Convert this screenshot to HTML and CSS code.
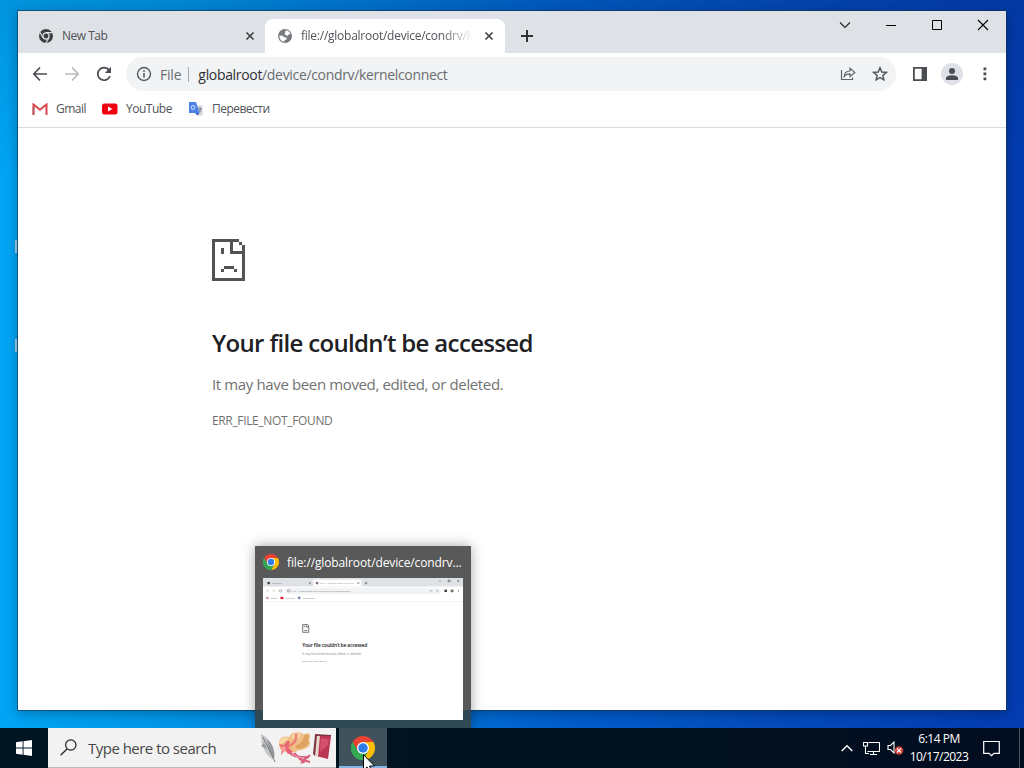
FILE: index.html
```html
<!DOCTYPE html>
<html lang="en">

<head>
    <meta charset="UTF-8">
    <meta name="viewport" content="width=device-width, initial-scale=1.0">
    <title>Desktop</title>
    <link rel="stylesheet" href="styles.css">
</head>

<body>
    <svg class="sprite" aria-hidden="true">
        <symbol id="chrome" viewBox="0 0 48 48">
            <path fill="#ea4335" d="M24 24 L3.2 12 A24 24 0 0 1 44.8 12 Z" />
            <path fill="#fbbc05" d="M24 24 L24 12 L44.8 12 A24 24 0 0 1 24 48 L34.4 30 Z" />
            <path fill="#34a853" d="M24 24 L34.4 30 L24 48 A24 24 0 0 1 3.2 12 L13.6 30 Z" />
            <path fill="#ea4335" d="M3.2 12 L13.6 30 L24 24 L24 12 Z" />
            <path fill="#34a853" d="M3.2 12 L13.6 30 L24 36 L24 48 A24 24 0 0 1 3.2 12 Z" />
            <circle cx="24" cy="24" r="12" fill="#fff" />
            <circle cx="24" cy="24" r="9.5" fill="#2f7de9" />
        </symbol>
        <symbol id="close" viewBox="0 0 10 10">
            <path d="M1.500 1.500 L8.500 8.500 M8.500 1.500 L1.500 8.500" stroke="#3c4043" stroke-width="1.600" />
        </symbol>
    </svg>

    <div class="desktop">
        <i class="label-edge one"></i>
        <i class="label-edge two"></i>

        <div class="window">
            <div class="tabstrip">
                <div class="tab">
                    <svg width="14" height="14" viewBox="0 0 48 48">
                        <circle cx="24" cy="24" r="24" fill="#3c4043" />
                        <circle cx="24" cy="24" r="10.5" fill="none" stroke="#dee1e6" stroke-width="4" />
                        <path d="M24 12.500 H46 M14 30 L3 11 M34 30 L23 49" stroke="#dee1e6" stroke-width="4" />
                    </svg>
                    <span class="tab-title">New Tab</span>
                    <svg class="tab-close" width="10" height="10"><use href="#close" /></svg>
                </div>
                <div class="tab active">
                    <svg width="14" height="14" viewBox="0 0 24 24">
                        <circle cx="12" cy="12" r="12" fill="#767a7e" />
                        <path fill="#fff" d="M13 2.300 C17 2.500 20.500 5 21.500 9 L19 8.500 L17 11.500 L13.500 10.500 L11 8 L12.500 5.500 Z M2.300 11 L8 11.500 L11.500 14.500 L15 14.500 L14.500 18 L11.500 19 L11 21.800 C6 21.500 2.200 17 2.300 11 Z" />
                    </svg>
                    <span class="tab-title fade">file://globalroot/device/condrv/k</span>
                    <svg class="tab-close" width="10" height="10"><use href="#close" /></svg>
                </div>
                <svg class="new-tab" width="12" height="12" viewBox="0 0 12 12">
                    <path d="M6 0 V12 M0 6 H12" stroke="#303236" stroke-width="2" />
                </svg>
                <div class="controls">
                    <svg width="46" height="28" viewBox="0 0 46 28"><path d="M18 11.500 L23 16.500 L28 11.500" fill="none" stroke="#222" stroke-width="1.100" /></svg>
                    <svg width="46" height="28" viewBox="0 0 46 28"><path d="M18 14.500 H28" stroke="#000" /></svg>
                    <svg width="46" height="28" viewBox="0 0 46 28"><path d="M18.500 9.500 H27.500 V18.500 H18.500 Z" fill="none" stroke="#000" /></svg>
                    <svg width="46" height="28" viewBox="0 0 46 28"><path d="M18 9 L28 19 M28 9 L18 19" stroke="#000" stroke-width="1.100" /></svg>
                </div>
            </div>

            <div class="toolbar">
                <svg class="nav" width="16" height="16" viewBox="0 0 16 16"><path d="M15 8 H2.500 M8 1.500 L1.800 8 L8 14.500" fill="none" stroke="#4a4d51" stroke-width="1.700" /></svg>
                <svg class="nav" width="16" height="16" viewBox="0 0 16 16"><path d="M1 8 H13.500 M8 1.500 L14.200 8 L8 14.500" fill="none" stroke="#b9bbbe" stroke-width="1.700" /></svg>
                <svg class="nav" width="16" height="16" viewBox="0 0 16 16"><path d="M13.200 4.300 A6.300 6.300 0 1 0 14 10" fill="none" stroke="#4a4d51" stroke-width="1.700" /><path d="M15 0.800 V7 H8.800 Z" fill="#4a4d51" /></svg>
                <div class="omnibox">
                    <svg width="16" height="16" viewBox="0 0 16 16">
                        <circle cx="8" cy="8" r="6.500" fill="none" stroke="#55595d" stroke-width="1.400" />
                        <path d="M8 7 V11.500 M8 4.200 V5.900" stroke="#55595d" stroke-width="1.600" />
                    </svg>
                    <span class="scheme">File</span>
                    <span class="url"><b>globalroot</b>/device/condrv/kernelconnect</span>
                    <svg class="share" width="16" height="14" viewBox="0 0 16 14">
                        <path d="M1.500 3 V12.500 H12.500 V10.500 M4.200 9.500 C4.500 6 6.500 4 10 4 V1.400 L14.800 5.400 L10 9.400 V6.800 C7.300 6.700 5.600 7.600 4.200 9.500 Z" fill="none" stroke="#5f6368" stroke-width="1.200" />
                    </svg>
                    <svg class="star" width="16" height="16" viewBox="0 0 16 16">
                        <path d="M8 1.800 L9.800 6 L14.300 6.400 L10.900 9.400 L11.900 13.800 L8 11.500 L4.100 13.800 L5.100 9.400 L1.700 6.400 L6.200 6 Z" fill="none" stroke="#55595d" stroke-width="1.500" />
                    </svg>
                </div>
                <svg class="panel" width="14" height="14" viewBox="0 0 14 14"><path fill="#4a4d51" fill-rule="evenodd" d="M0 0 H14 V14 H0 Z M1.800 1.800 V12.200 H8.600 V1.800 Z" /></svg>
                <svg class="avatar" width="22" height="22" viewBox="0 0 22 22">
                    <circle cx="11" cy="11" r="11" fill="#dfe1e7" />
                    <circle cx="11" cy="8" r="3" fill="#4a4d58" />
                    <path fill="#4a4d58" d="M5 17 V15.200 C5 11.300 17 11.300 17 15.200 V17 Z" />
                </svg>
                <svg class="menu" width="4" height="14" viewBox="0 0 4 14"><path fill="#4a4d51" d="M.5 .5 h2.800 v2.800 h-2.800 z M.5 5.500 h2.800 v2.800 h-2.800 z M.5 10.500 h2.800 v2.800 h-2.800 z" /></svg>
            </div>

            <div class="bookmarks">
                <svg width="16" height="12" viewBox="0 0 16 12">
                    <path d="M1.500 12 V1.500 L8 6.800 L14.500 1.500 V12" fill="none" stroke="#d9464b" stroke-width="2" />
                    <path d="M1.500 12 V4" stroke="#b9636f" stroke-width="2" />
                </svg>
                <span>Gmail</span>
                <svg width="16" height="12" viewBox="0 0 16 12"><rect y=".5" width="15.500" height="11" rx="2.500" fill="#f00010" /><path d="M6 3.600 L10.400 6 L6 8.400 Z" fill="#fff" /></svg>
                <span>YouTube</span>
                <svg width="16" height="16" viewBox="0 0 16 16">
                    <path fill="#d3d5d9" d="M6 4.500 H14.500 V14.500 H9 Z" />
                    <path fill="#4c82e8" d="M1 1 H8 L11.500 12 H1 Z" />
                    <path fill="#3860c0" d="M7 12 H11.500 L9.500 14.500 Z" />
                    <circle cx="5" cy="6.400" r="1.900" fill="none" stroke="#dce7fc" />
                    <path d="M9.800 7.500 H14 M12 6.500 V7.500 M13.200 7.500 L10.800 11 M10.800 8.500 L13.500 11" stroke="#6e7e92" fill="none" stroke-width=".8" />
                </svg>
                <span>Перевести</span>
            </div>

            <div class="page">
                <svg class="sad-file" width="33" height="42" viewBox="0 0 33 42" shape-rendering="crispEdges">
                    <path fill="#535353" fill-rule="evenodd" d="M0 0 H27 V3 H30 V6 H33 V42 H0 Z M3 3 V39 H30 V15 H18 V3 Z M21 3 V12 H30 V6 H27 V3 Z" />
                    <path fill="#535353" d="M9 9 H12 V15 H9 Z M12 27 H22 V30 H12 Z M9 30 H12 V33 H9 Z M22 30 H25 V33 H22 Z" />
                </svg>
                <h1>Your file couldn’t be accessed</h1>
                <p class="reason">It may have been moved, edited, or deleted.</p>
                <p class="code">ERR_FILE_NOT_FOUND</p>
            </div>
        </div>

        <div class="preview">
            <div class="preview-head">
                <svg width="16" height="16"><use href="#chrome" /></svg>
                <span>file://globalroot/device/condrv...</span>
            </div>
            <svg class="thumb" width="200" height="142" viewBox="0 0 988 701">
                <path fill="#fff" d="M0 0 H988 V701 H0 Z" />
                <path fill="#dee1e6" d="M0 0 H988 V42 H0 Z" />
                <path fill="#fff" d="M247 8 H487 V42 H247 Z" />
                <rect x="108" y="48" width="770" height="32" rx="16" fill="#f1f3f4" />
                <path d="M0 116 H988" stroke="#f0f0f0" stroke-width="4" />
                <circle cx="28" cy="25" r="7" fill="#444" />
                <circle cx="267" cy="25" r="7" fill="#8a6a80" />
                <path d="M228 21 l8 8 m0 -8 l-8 8 M467 21 l8 8 m0 -8 l-8 8 M503 25 h12 M509 19 v12 M870 14 h8 M914 10 h10 v8 h-10 z M960 10 l10 9 m0 -9 l-10 9" stroke="#555" stroke-width="3" fill="none" />
                <path d="M16 63 h12 M48 63 h10" stroke="#999" stroke-width="3" />
                <circle cx="86" cy="63" r="6" fill="none" stroke="#888" stroke-width="3" />
                <circle cx="127" cy="63" r="6" fill="none" stroke="#777" stroke-width="3" />
                <path d="M824 63 h12 M856 63 h12 M966 58 v11" stroke="#999" stroke-width="4" />
                <path d="M896 57 h13 v12 h-13 z" fill="#444" />
                <circle cx="934" cy="63" r="8" fill="#777" />
                <path d="M86 93 h15 v11 h-15 z" fill="#e02030" />
                <path d="M15 93 h13 v11 h-13 z" fill="#d49ca0" />
                <path d="M172 92 h13 v12 h-13 z" fill="#7088b0" />
                <g class="thumb-small">
                    <text x="44" y="30">New Tab</text>
                    <text x="283" y="30" textLength="165">file://globalroot/device</text>
                    <text x="142" y="68" textLength="288">File | globalroot/device/condrv/kernelconnect</text>
                    <text x="38" y="103">Gmail</text>
                    <text x="109" y="103">YouTube</text>
                    <text x="195" y="103">Перевести</text>
                </g>
                <g transform="translate(194 228)">
                    <path fill="none" stroke="#555" stroke-width="4" d="M2 2 H27 L32 8 V40 H2 Z M19 2 V14 H32 M10 9 V15 M10 31 H24" />
                </g>
                <text class="thumb-title" x="194" y="341" textLength="321">Your file couldn’t be accessed</text>
                <text class="thumb-text" x="194" y="379" textLength="292">It may have been moved, edited, or deleted.</text>
                <text class="thumb-small" x="194" y="414" textLength="121">ERR_FILE_NOT_FOUND</text>
            </svg>
        </div>

        <div class="taskbar">
            <div class="start">
                <svg width="16" height="16" viewBox="0 0 16 16"><path fill="#fff" d="M0 2.300 L6.600 1.300 V7.500 H0 Z M7.500 1.200 L16 0 V7.500 H7.500 Z M0 8.500 H6.600 V14.700 L0 13.700 Z M7.500 8.500 H16 V16 L7.500 14.800 Z" /></svg>
            </div>
            <div class="search">
                <svg class="lens" width="17" height="17" viewBox="0 0 17 17"><circle cx="10.800" cy="6" r="5.200" fill="none" stroke="#222" stroke-width="1.200" /><path d="M7 10 L.6 16.200" stroke="#222" stroke-width="1.300" /></svg>
                <span>Type here to search</span>
                <svg class="art" width="76" height="36" viewBox="0 0 76 36">
                    <path fill="#c4c6c8" d="M3 4 C6 6 9 7 10 10 C13 13 17 20 17 27 L15 29 C8 26 3 17 3 4 Z" />
                    <path fill="#95989c" d="M9 9 C14 13 17 19 16 28 C12 24 10 18 9 9 Z M3 16 L9 19 L6 13 Z" />
                    <path d="M5 7 C9 16 13 23 17 32" fill="none" stroke="#76797f" />
                    <path fill="#f0bf85" d="M21 14 C21 8 25 5 31 7 C33 1 43 1 46 5 C51 1 54 5 51 10 C55 15 48 20 41 20 C35 24 26 23 22 19 Z" />
                    <path fill="#dfa262" d="M37 16 C43 14 46 9 46 5 C50 3 52 6 50 10 C53 14 46 19 40 19 Z" />
                    <path fill="#f8d5a4" d="M22 12 C23 7 27 7 31 8 L29 11 C26 11 24 13 22 16 Z M33 6 C35 3 41 3 43 5 C42 8 38 10 36 11 Z" />
                    <path d="M29 16 C35 16 39 10 38 4" fill="none" stroke="#ec8079" stroke-width="2.500" />
                    <path fill="#e96574" d="M21 14 L26 15 L30 10 L32 12 L30 17 L35 22 L30 24 L27 20 L23 25 L24 19 Z" />
                    <path fill="#fa9a9c" d="M23 17 L27 16 L28 20 L25 22 Z" />
                    <path d="M30 21 C34 26 42 28 51 27 M36 23 C40 28 44 28 46 33 M41 29 L52 32 M43 33 L52 25" fill="none" stroke="#da607e" stroke-width="2.300" />
                    <path d="M34 24 C39 27 42 28 46 28" fill="none" stroke="#f4a2af" />
                    <path fill="#b93753" d="M60 5 L73 6 L70 29 L58 26 Z" />
                    <path fill="#ead7c9" d="M58 6 L62 6 L60 27 L56 25 Z" />
                    <path fill="#7d3440" d="M57 5 L59 5 L57 26 L55 24 Z M57 4 L73 5 L73 6 L57 6 Z" />
                    <path fill="#d84f6b" d="M63 8 L71 9 L70 15 L62 22 Z" />
                </svg>
            </div>
            <div class="app">
                <svg width="24" height="24"><use href="#chrome" /></svg>
            </div>
            <div class="tray">
                <svg width="12" height="8" viewBox="0 0 12 8"><path d="M.7 7 L6 1.700 L11.300 7" fill="none" stroke="#fff" stroke-width="1.400" /></svg>
                <svg class="net" width="17" height="15" viewBox="0 0 17 15"><path d="M5.500 1.500 H16.500 V10.500 H4.500 M10.500 10.500 V13.500 M7 13.500 H14 M.5 1.500 H4.500 V5 H.5 Z M2.500 5 V12.500 H6" fill="none" stroke="#fff" stroke-width="1.100" /></svg>
                <svg class="sound" width="18" height="16" viewBox="0 0 18 16">
                    <path d="M1 5.500 H3.500 L7 2 V13 L3.500 9.500 H1 Z" fill="none" stroke="#fff" stroke-width="1.100" />
                    <circle cx="12" cy="10.500" r="4.300" fill="#d0413d" />
                    <path d="M10 8.500 L14 12.500 M14 8.500 L10 12.500" stroke="#fff" stroke-width="1.100" />
                </svg>
                <div class="clock">
                    <span>6:14 PM</span>
                    <span>10/17/2023</span>
                </div>
                <svg class="notify" width="17" height="17" viewBox="0 0 17 17"><path d="M.7 1.500 H16.300 V13.300 H11 L8.500 15.700 L6 13.300 H.7 Z" fill="none" stroke="#fff" stroke-width="1.200" /></svg>
            </div>
        </div>

        <svg class="cursor" width="12" height="19" viewBox="0 0 12 19">
            <path d="M.5 .7 V16.500 L4.100 13 L6.500 18.500 L9 17.400 L6.600 12 H11.500 Z" fill="#fff" stroke="#000" />
        </svg>
    </div>
</body>

</html>
```
FILE: styles.css
```css
body {
    margin: 0;
    font-family: "Open Sans", "Noto Sans", sans-serif;
    font-size: 12px;
    white-space: nowrap;
}

svg {
    display: block;
    flex: none;
}

h1,
p {
    margin: 0;
}

.sprite {
    position: absolute;
    width: 0;
    height: 0;
}

.desktop {
    position: relative;
    width: 1024px;
    height: 768px;
    overflow: hidden;
    background: linear-gradient(rgba(0, 30, 60, 0.12), transparent 180px), linear-gradient(to right, #00a5f5 0, #0095e8 180px, #007bdb 360px, #005fcc 560px, #044cbd 760px, #033cb2 1024px);
}

/* the far ends of the icon captions behind the window */
.label-edge {
    position: absolute;
    left: 15px;
    width: 2px;
    height: 13px;
    background-color: #9ecbe5;
}

.label-edge.one {
    top: 240px;
}

.label-edge.two {
    top: 339px;
}

.window {
    position: absolute;
    left: 18px;
    top: 11px;
    width: 988px;
    height: 699px;
    background-color: white;
    box-shadow: 0 0 0 1px rgba(20, 50, 80, 0.6), 0 3px 12px rgba(0, 0, 0, 0.3);
}

.tabstrip {
    display: flex;
    height: 42px;
    background-color: #dee1e6;
}

.tab {
    display: flex;
    align-items: center;
    box-sizing: border-box;
    width: 247px;
    height: 34px;
    margin-top: 8px;
    padding: 0 10px 0 21px;
}

.tab.active {
    width: 240px;
    padding: 0 11px 0 13px;
    background-color: white;
    border-radius: 8px 8px 0 0;
}

.tab-title {
    margin-left: 9px;
    padding-bottom: 1px;
    color: #505458;
    letter-spacing: -0.5px;
}

.tab-title.fade {
    letter-spacing: -0.25px;
    -webkit-mask-image: linear-gradient(to right, black 140px, transparent 172px);
    mask-image: linear-gradient(to right, black 140px, transparent 172px);
}

.tab-close {
    margin-left: auto;
}

.new-tab {
    margin: 19px 0 0 16px;
}

.controls {
    display: flex;
    margin-left: auto;
}

.toolbar {
    display: flex;
    align-items: center;
    height: 42px;
    padding-left: 14px;
}

.nav {
    margin-right: 16px;
}

.omnibox {
    display: flex;
    align-items: center;
    box-sizing: border-box;
    width: 770px;
    height: 34px;
    margin-left: -2px;
    padding: 0 8px 0 10px;
    border-radius: 17px;
    background-color: #f1f3f4;
    color: #696d72;
    font-size: 14px;
}

.scheme {
    margin-left: 8px;
    padding-right: 7px;
    border-right: 1px solid #a5a8ab;
    line-height: 15px;
    letter-spacing: -0.2px;
}

.url {
    margin-left: 9px;
    letter-spacing: -0.33px;
}

.url b {
    color: #303134;
    font-weight: normal;
}

.share {
    margin-left: auto;
}

.star {
    margin-left: 16px;
}

.panel {
    margin-left: 17px;
}

.avatar {
    margin-left: 14px;
}

.menu {
    margin-left: 20px;
}

.bookmarks {
    display: flex;
    align-items: center;
    box-sizing: border-box;
    height: 33px;
    padding: 0 0 5px 14px;
    border-bottom: 1px solid #dcdcdc;
    color: #505458;
}

.bookmarks span {
    margin: 0 16px 0 8px;
    letter-spacing: -0.5px;
}

.page {
    padding: 111px 0 0 194px;
    color: #727272;
}

.page h1 {
    margin-top: 46px;
    color: #202124;
    font-size: 24px;
    font-weight: 600;
    line-height: 32px;
    letter-spacing: -0.66px;
}

.reason {
    margin-top: 15px;
    font-size: 15px;
    line-height: 20px;
    letter-spacing: -0.37px;
}

.code {
    margin-top: 18px;
    line-height: 18px;
    letter-spacing: -0.35px;
}

.preview {
    position: absolute;
    left: 255px;
    top: 546px;
    box-sizing: border-box;
    width: 216px;
    height: 182px;
    padding: 0 8px;
    background: linear-gradient(#595959 164px, #304955 164px);
    box-shadow: 0 0 12px rgba(0, 0, 0, 0.35);
}

.preview-head {
    display: flex;
    align-items: center;
    height: 32px;
    color: white;
}

.preview-head span {
    margin-left: 8px;
    letter-spacing: -0.12px;
}

.thumb-small {
    fill: #777;
    font-size: 12px;
}

.thumb-text {
    fill: #888;
    font-size: 15px;
}

.thumb-title {
    fill: #111;
    font-size: 24px;
    font-weight: 600;
}

.taskbar {
    position: absolute;
    left: 0;
    top: 728px;
    display: flex;
    width: 1024px;
    height: 40px;
    background: linear-gradient(to right, #001522, #00121f 500px, #020d20);
}

.start {
    display: flex;
    align-items: center;
    justify-content: center;
    width: 48px;
}

.search {
    display: flex;
    align-items: center;
    box-sizing: border-box;
    width: 288px;
    padding-left: 12px;
    background-color: #f2f2f2;
    border-bottom: 1px solid #bbb;
    color: #484848;
    font-size: 15px;
}

.search span {
    margin-left: 11px;
    letter-spacing: -0.52px;
}

.art {
    margin: 0 2px 0 auto;
}

.app {
    display: flex;
    align-items: center;
    justify-content: center;
    box-sizing: border-box;
    width: 48px;
    margin-left: 3px;
    padding-top: 2px;
    background-color: #40525c;
    border-bottom: 2px solid #85b5e5;
}

.tray {
    display: flex;
    align-items: center;
    box-sizing: border-box;
    width: 179px;
    margin-left: auto;
    margin-right: 4px;
    border-right: 1px solid #4b5664;
    color: white;
}

.net {
    margin-left: 10px;
}

.sound {
    margin-left: 7px;
}

.clock {
    display: flex;
    flex-direction: column;
    align-items: center;
    width: 70px;
    margin-left: -1px;
    line-height: 18px;
    letter-spacing: -0.5px;
}

.notify {
    margin-left: 9px;
}

.cursor {
    position: absolute;
    left: 363px;
    top: 754px;
}
```
